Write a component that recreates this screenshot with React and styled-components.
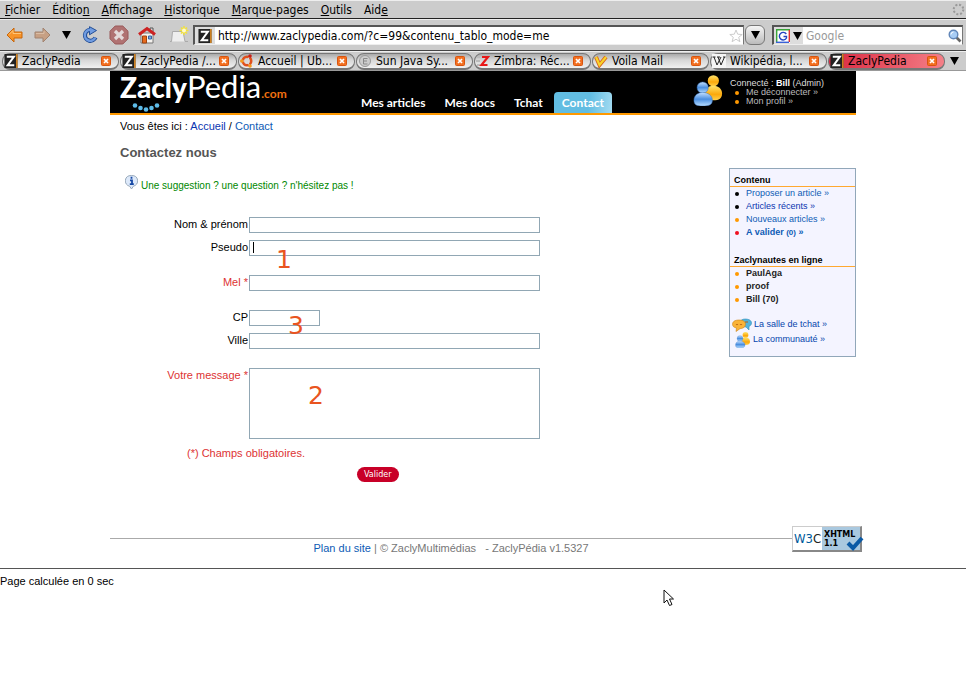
import React from "react";
import styled, { createGlobalStyle } from "styled-components";

const ui = '"DejaVu Sans Condensed", "DejaVu Sans", sans-serif';
const page = '"Liberation Sans", Arial, sans-serif';

const GlobalStyle = createGlobalStyle`
  * { box-sizing: border-box; }
  body { margin: 0; background: #fff; color: #000; font: 11px/14px ${page}; }
  a { color: #0645ad; text-decoration: none; }
  button, input, textarea { font: inherit; color: inherit; }
  svg { display: block; flex: none; }
`;

const Window = styled.div`
  position: relative;
  min-height: 100vh;
  overflow: hidden;
`;

/* ---------- browser chrome ---------- */
const Chrome = styled.div`
  background: #cccccc;
  font: 12px/16px ${ui};
`;
const MenuBar = styled.nav`
  display: flex;
  align-items: center;
  gap: 12px;
  height: 19px;
  padding: 0 1px 0 5px;
  border-top: 1px solid #eeeeee;
  border-bottom: 1px solid #222222;
`;
const MenuItem = styled.button`
  border: 0;
  padding: 0;
  background: none;
`;
const Push = styled.span`
  margin-left: auto;
`;
const ToolBar = styled.div`
  display: flex;
  align-items: center;
  height: 32px;
  padding: 0 3px 0 4px;
  border-top: 1px solid #eeeeee;
  border-bottom: 1px solid #444444;
`;
const IconButton = styled.button`
  display: flex;
  justify-content: center;
  width: ${(p) => p.$w}px;
  padding: 0;
  border: 0;
  background: none;
`;
const Field = styled.div`
  display: flex;
  align-items: center;
  flex: ${(p) => (p.$grow ? "1" : "0 0 191px")};
  height: 20px;
  border: 1px solid #777777;
  border-top: 2px solid #555555;
  border-left: 2px solid #555555;
  border-bottom-color: #eeeeee;
  background: #fff;
`;
const FieldIcon = styled.span`
  display: flex;
  align-items: center;
  justify-content: center;
  gap: 3px;
  width: ${(p) => p.$w}px;
  height: 100%;
  background: #dddddd;
`;
const FieldInput = styled.input`
  flex: 1;
  min-width: 0;
  padding: 0 3px;
  border: 0;
  outline: 0;
  background: none;
  &::placeholder { color: #999999; opacity: 1; }
`;
const DropButton = styled.button`
  display: flex;
  align-items: center;
  justify-content: center;
  width: 20px;
  height: 20px;
  margin: 0 7px 0 1px;
  padding: 0;
  border: 1px solid #777777;
  border-radius: 6px;
  background: linear-gradient(#f5f5f5, #bbbbbb);
`;
const TabBar = styled.div`
  display: flex;
  align-items: flex-end;
  gap: 1px;
  height: 20px;
  padding: 0 3px 0 2px;
  border-top: 1px solid #eeeeee;
  border-bottom: 1px solid #999999;
`;
const Tab = styled.div`
  display: flex;
  align-items: center;
  flex: 1;
  min-width: 0;
  height: 17px;
  padding: 0 7px 0 1px;
  border: 1px solid #777777;
  border-radius: 8px;
  border-bottom-width: 2px;
  background: ${(p) =>
    p.$active
      ? "linear-gradient(100deg, #d92740, #f58088)"
      : "linear-gradient(#aaaaaa, #d5d5d5 40%, #f0f0f0)"};
`;
const TabTitle = styled.button`
  flex: 1;
  min-width: 0;
  margin: 0;
  padding: 0 0 0 4px;
  border: 0;
  background: none;
  text-align: left;
  white-space: nowrap;
`;
const Close = styled.button`
  padding: 0;
  border: 0;
  background: none;
`;
const TabMenu = styled(IconButton)`
  align-self: center;
`;

/* ---------- site ---------- */
const Site = styled.div`
  max-width: 746px;
  margin: 0 auto;
`;
const Header = styled.header`
  display: flex;
  height: 44px;
  padding-left: 10px;
  border-bottom: 2px solid #ff9900;
  background: #000;
  color: #fff;
`;
const Logo = styled.a`
  position: relative;
  display: flex;
  align-items: baseline;
  width: 233px;
  color: #fff;
  font: 900 28px/31px Lato, sans-serif;
`;
const LogoThin = styled.span`
  font-size: 31px;
  font-weight: 400;
`;
const LogoCom = styled.span`
  color: #f07010;
  font-size: 12px;
  font-weight: 700;
`;
const Dots = styled.svg`
  position: absolute;
  left: 12px;
  top: 32px;
`;
const MainNav = styled.nav`
  display: flex;
  align-items: flex-end;
  gap: 3px;
`;
const NavLink = styled.a`
  padding: 0 8px;
  border-radius: 4px 4px 0 0;
  background: ${(p) => (p.$active ? "linear-gradient(100deg, #62bde2 60%, #a5dcf2)" : "none")};
  color: #fff;
  font: 700 12px/21px Lato, sans-serif;
  white-space: nowrap;
`;
const Account = styled.div`
  display: flex;
  gap: 6px;
  width: 163px;
  margin-left: auto;
  padding-top: 4px;
  font-size: 9px;
  line-height: 9px;
  color: #dddddd;
  a { color: #bbbbbb; }
  b { color: #fff; }
`;
const AccountText = styled.div`
  padding-top: 4px;
`;
const List = styled.ul`
  margin: 0;
  padding: 0;
  list-style: none;
`;
const Item = styled.li`
  display: flex;
  align-items: center;
  gap: 7px;
  padding-left: 5px;
  &::before {
    content: "";
    width: 4px;
    height: 4px;
    border-radius: 2px;
    background: ${(p) => p.$dot || "#ff9900"};
  }
`;
const Columns = styled.div`
  display: flex;
  align-items: flex-start;
`;
const Main = styled.main`
  flex: 1;
  padding: 4px 0 0 10px;
`;
const Crumbs = styled.nav`
  white-space: pre;
`;
const Title = styled.h1`
  margin: 12px 0 0;
  color: #555555;
  font-size: 13px;
  line-height: 16px;
`;
const Hint = styled.p`
  display: flex;
  gap: 3px;
  margin: 14px 0 0 5px;
  color: #008800;
  font-size: 10px;
  line-height: 21px;
`;
const Form = styled.form`
  margin-top: 21px;
`;
const Row = styled.div`
  display: flex;
  align-items: flex-start;
  gap: 1px;
  margin-top: ${(p) => p.$top || 0}px;
  position: relative;
`;
const Label = styled.label`
  width: 128px;
  line-height: 14px;
  text-align: right;
  white-space: nowrap;
  color: ${(p) => (p.$required ? "#dd3333" : "#000")};
`;
const TextBox = styled.input`
  width: ${(p) => (p.$short ? 71 : 291)}px;
  height: 16px;
  padding: 0 3px;
  border: 1px solid #91a7b4;
  border-radius: 0;
  outline: 0;
  background: #fff;
`;
const MessageBox = styled(TextBox)`
  height: 71px;
  resize: none;
`;
const Caret = styled.span`
  position: absolute;
  left: 133px;
  top: 2px;
  width: 1px;
  height: 11px;
  background: #000;
`;
const Mark = styled.span`
  position: absolute;
  left: ${(p) => p.$x}px;
  top: ${(p) => p.$y}px;
  z-index: 1;
  color: #e95420;
  font: 25px/28px "DejaVu Sans", sans-serif;
  pointer-events: none;
`;
const Note = styled.p`
  margin: 7px 0 0 67px;
  color: #dd3333;
`;
const Submit = styled.button`
  display: block;
  height: 15px;
  margin: 7px 0 0 237px;
  padding: 0 7px;
  border: 0;
  border-radius: 8px;
  background: #c80028;
  color: #fff;
  font: 8px/15px "DejaVu Sans", sans-serif;
`;
const Aside = styled.aside`
  width: 127px;
  margin-top: 53px;
  padding: 6px 0 9px;
  border: 1px solid #91a7b9;
  background: #f4f4ff;
  color: #222222;
  font-size: 9px;
  line-height: 13px;
  small { font-size: 8px; }
`;
const AsideTitle = styled.h2`
  margin: ${(p) => p.$top || 0}px 0 0;
  padding-left: 4px;
  border-bottom: 1px solid #ffa830;
  color: #000;
  font-size: 9px;
  line-height: 11px;
`;
const AsideLink = styled.a`
  display: flex;
  align-items: center;
  gap: 2px;
  height: 15px;
  padding-left: ${(p) => p.$indent}px;
`;
const Gap = styled.div`
  height: 11px;
`;
const Blue = styled.a`
  && { color: ${(p) => (p.$dark ? "#0a35b0" : "#0d5bb5")}; }
`;
const Footer = styled.footer`
  display: flex;
  align-items: flex-start;
  margin: 44px -9px 0 0;
`;
const Legal = styled.div`
  flex: 1;
  margin-top: 12px;
  padding-top: 2px;
  border-top: 1px solid #aaaaaa;
  color: #777777;
  text-align: center;
  white-space: pre;
`;
const Badge = styled.a`
  position: relative;
  display: flex;
  width: 70px;
  height: 26px;
  margin-right: 3px;
  border: 1px solid #cccccc;
  border-right: 2px solid #888888;
  border-bottom: 2px solid #888888;
`;
const W3 = styled.span`
  width: 29px;
  color: #005a9c;
  font: 13px/23px ${ui};
  text-align: center;
  i { color: #222222; font-style: normal; }
`;
const Xhtml = styled.span`
  flex: 1;
  padding: 3px 0 0 2px;
  background: #a9c8df;
  color: #000;
  font: 700 8px/9px "DejaVu Sans", sans-serif;
`;
const Check = styled.svg`
  position: absolute;
  left: 53px;
  top: 8px;
`;
const Timing = styled.p`
  margin: 13px 0 0;
  padding-top: 5px;
  border-top: 1px solid #555555;
`;
const Pointer = styled.svg`
  position: absolute;
  left: 663px;
  top: 589px;
`;

/* ---------- drawings ---------- */
const Arrow = ({ flip, faded }) => (
  <svg width="17" height="16" viewBox="0 0 17 16">
    <path
      d={flip ? "M16 8 9 1v4H1v6h8v4z" : "M1 8l7-7v4h8v6H8v4z"}
      fill={faded ? "#c7a084" : "#f79429"}
      stroke={faded ? "#a18370" : "#c8660a"}
    />
    <path d={flip ? "M2 6.5h8V4" : "M3 7.5 7 3.5v3h8"} fill="none" stroke={faded ? "#dabda5" : "#ffc578"} />
  </svg>
);
const Down = () => (
  <svg width="9" height="8" viewBox="0 0 9 8"><path d="M0 0h9L4.500 8z" fill="#000" /></svg>
);
const Reload = () => (
  <svg width="18" height="18" viewBox="0 0 18 18">
    <path d="M14.500 11.500A5.500 5.500 0 1 1 9 3.800" fill="none" stroke="#234e96" strokeWidth="4.200" />
    <path d="M8.500 .7 15.500 4.500 8.500 8.800z" fill="#6f9be0" stroke="#234e96" />
    <path d="M14.200 11.800A5.500 5.500 0 1 1 9.500 3.800" fill="none" stroke="#6f9be0" strokeWidth="2.400" />
  </svg>
);
const Stop = () => (
  <svg width="20" height="20" viewBox="0 0 20 20">
    <path d="M6.200 1h7.600L19 6.200v7.600L13.800 19H6.200L1 13.800V6.200z" fill="#b07272" stroke="#985858" />
    <path d="m6 6 8 8m0-8-8 8" stroke="#e4dada" strokeWidth="3.200" />
  </svg>
);
const Home = () => (
  <svg width="18" height="18" viewBox="0 0 18 18">
    <path d="M3 7h12v10H3z" fill="#f5f2ee" stroke="#777" />
    <path d="M12 2h3v4h-3z" fill="#ddd" stroke="#555" />
    <path d="M1 8.500 9 2.500l8 6" fill="none" stroke="#c22" strokeWidth="3" />
    <path d="M4.500 10h4v7h-4z" fill="#e86a1c" stroke="#9d4410" />
    <path d="M10.500 10h3v3h-3z" fill="#7ea8dd" stroke="#3465a4" />
  </svg>
);
const NewTab = () => (
  <svg width="20" height="18" viewBox="0 0 20 18">
    <path d="M1 15.500h1.500L3.500 5.500H14l2 10h3" fill="#eeeeee" stroke="#aaa" />
    <path d="M15 0v9M10.500 4.500h9M12 1.500l6 6M18 1.500l-6 6" stroke="#f2e13c" strokeWidth="1.600" />
    <circle cx="15" cy="4.500" r="2" fill="#fffbd0" />
  </svg>
);
const Zed = () => (
  <svg width="14" height="14" viewBox="0 0 14 15">
    <path d="M0 0h14v15H0z" fill="#222" /><path d="M12.500 0H14v15h-1.500z" fill="#e89020" />
    <path d="M2.500 3h7.500L3.500 12h7" fill="none" stroke="#fff" strokeWidth="2.200" />
  </svg>
);
const Ubuntu = () => (
  <svg width="14" height="14" viewBox="0 0 14 14">
    <circle cx="7" cy="7" r="4.200" fill="none" stroke="#e0501c" strokeWidth="2.600" />
    <path d="M7 7 1 7M7 7l3-5M7 7l3 5" stroke="#d8d8d8" strokeWidth="1" />
    <circle cx="1.800" cy="7" r="1.800" fill="#f39a1e" /><circle cx="10" cy="2" r="1.800" fill="#c5201c" /><circle cx="10" cy="12" r="1.800" fill="#f39a1e" />
  </svg>
);
const Euro = () => (
  <svg width="14" height="14" viewBox="0 0 14 14">
    <circle cx="7" cy="7" r="5.500" fill="#ccc" stroke="#999" /><path d="M9.500 4.500H5.500v5.500h4M5.500 7h3.500" fill="none" stroke="#888" />
  </svg>
);
const Zimbra = () => (
  <svg width="14" height="14" viewBox="0 0 14 14">
    <path d="M1 3h3M0 7h4M1 11h3" stroke="#bbb" strokeWidth="2" /><path d="M6 3h6L5.500 11h6" fill="none" stroke="#e81818" strokeWidth="2.200" />
  </svg>
);
const Voila = () => (
  <svg width="14" height="14" viewBox="0 0 14 14">
    <path d="m2 3 3.500 8L12 3" fill="none" stroke="#d8661c" strokeWidth="4" /><path d="m2 3 3.500 8L12 3" fill="none" stroke="#f8d42a" strokeWidth="2.200" />
  </svg>
);
const Wiki = () => (
  <svg width="14" height="14" viewBox="0 0 14 14">
    <path d="M0 0h14v14H0z" fill="#f5f5f5" /><path d="m2 3 3 8 4-8M6 3l3 8 3.500-8M.5 3h3M5 3h3M11 3h2.500" fill="none" stroke="#222" />
  </svg>
);
const CloseIcon = () => (
  <svg width="10" height="10" viewBox="0 0 10 10">
    <rect x=".5" y=".5" width="9" height="9" rx="1" fill="#f37021" stroke="#d8540f" /><path d="m3 3 4 4m0-4L3 7" stroke="#fff" strokeWidth="1.700" />
  </svg>
);
const Star = () => (
  <svg width="14" height="14" viewBox="0 0 14 14"><path d="m7 1 1.700 4.200 4.500.3-3.500 2.800 1.200 4.400L7 10.200l-3.900 2.500 1.200-4.400L.8 5.500l4.500-.3z" fill="#fff" stroke="#ccc" /></svg>
);
const Google = () => (
  <svg width="14" height="14" viewBox="0 0 14 14">
    <path d="M0 0h14v14H0z" fill="#fff" /><path d="M.7 14V.7H14" fill="none" stroke="#3aa53a" strokeWidth="1.400" /><path d="M13.300 1v12" stroke="#e03030" strokeWidth="1.400" /><path d="M0 13.300h13" stroke="#3a62d8" strokeWidth="1.400" />
    <path d="M10.300 5A3.800 3.800 0 1 0 10.500 9V7.500H7.500" fill="none" stroke="#2545c0" strokeWidth="1.400" />
  </svg>
);
const Lens = () => (
  <svg width="14" height="14" viewBox="0 0 14 14">
    <path d="m8.500 8.500 4 4" stroke="#666" strokeWidth="2.600" /><circle cx="5.500" cy="5.500" r="4.300" fill="#a8cdf5" stroke="#6186b8" strokeWidth="1.400" /><path d="M3 5.500A2.500 2.500 0 0 1 5.500 3" fill="none" stroke="#fff" />
  </svg>
);
const Spinner = () => (
  <svg width="13" height="13" viewBox="0 0 13 13"><circle cx="6.500" cy="6.500" r="4.800" fill="none" stroke="#999" strokeWidth="2" strokeDasharray="2 1.770" /></svg>
);
const People = ({ size = 32 }) => (
  <svg width={size} height={size} viewBox="0 0 32 32">
    <defs>
      <linearGradient id="gold" x2="0" y2="1"><stop stopColor="#ffe36a" /><stop offset=".6" stopColor="#fba80c" /><stop offset="1" stopColor="#ffd04a" /></linearGradient>
      <linearGradient id="sky" x2="0" y2="1"><stop stopColor="#c4e0ff" /><stop offset=".5" stopColor="#4b8fe0" /><stop offset="1" stopColor="#b9deff" /></linearGradient>
    </defs>
    <circle cx="21" cy="6" r="5.800" fill="url(#gold)" /><path d="M12 19c0-5 4-8 9-8s9 3 9 8-3 7-9 7-9-2-9-7z" fill="url(#gold)" />
    <circle cx="10" cy="13" r="5.800" fill="url(#sky)" stroke="#3973bd" strokeWidth=".5" /><path d="M1 26c0-5 4-8 9-8s10 3 10 8-4 6-10 6-9-1-9-6z" fill="url(#sky)" stroke="#3973bd" strokeWidth=".5" />
  </svg>
);
const Chat = () => (
  <svg width="20" height="14" viewBox="0 0 20 14">
    <path d="M13 1c4 0 6.500 1.500 6.500 4 0 1.700-1 2.800-2.500 3.400V12l-3-3c-4 0-6-1.500-6-4s2-4 5-4z" fill="#52b3dd" stroke="#348fbb" strokeWidth=".6" />
    <path d="M7 2c4 0 6.500 1.500 6.500 4.300S11 10.500 8 10.700L4 13.500 4.500 10C2 9.500.5 8.300.5 6.300.5 3.500 3 2 7 2z" fill="#f9b338" stroke="#c9851c" strokeWidth=".6" />
    <path d="M4 6c.5 1 1.500 1 2 0m2 0c.5 1 1.500 1 2 0m3-2h3" fill="none" stroke="#b45d10" />
  </svg>
);
const Info = () => (
  <svg width="13" height="15" viewBox="0 0 13 15">
    <path d="M6.500.5a6 5.500 0 0 1 1.800 10.800L6.500 14l-1.800-2.700A6 5.500 0 0 1 6.500.5z" fill="#dde9fa" stroke="#9ab" />
    <path d="M6.500 1.800v2M5 5.300h2v3.500M4.800 9.200h4" fill="none" stroke="#1749a5" strokeWidth="1.800" />
  </svg>
);

const MENUS = [["", "F", "ichier"], ["Éditio", "n", ""], ["", "A", "ffichage"], ["", "H", "istorique"], ["", "M", "arque-pages"], ["", "O", "utils"], ["Aid", "e", ""]];
const TABS = [
  [Zed, "ZaclyPedia"], [Zed, "ZaclyPedia /..."], [Ubuntu, "Accueil | Ub..."], [Euro, "Sun Java Sy..."],
  [Zimbra, "Zimbra: Réc..."], [Voila, "Voila Mail"], [Wiki, "Wikipédia, l..."], [Zed, "ZaclyPedia"],
];
const NAV = ["Mes articles", "Mes docs", "Tchat", "Contact"];

export default function App() {
  return (
    <Window>
      <GlobalStyle />
      <Chrome>
        <MenuBar>
          {MENUS.map(([a, u, b]) => <MenuItem key={a + u + b}>{a}<u>{u}</u>{b}</MenuItem>)}
          <Push><Spinner /></Push>
        </MenuBar>
        <ToolBar>
          <IconButton $w={20} aria-label="Précédent"><Arrow /></IconButton>
          <IconButton $w={36} aria-label="Suivant"><Arrow flip faded /></IconButton>
          <IconButton $w={12} aria-label="Pages récentes"><Down /></IconButton>
          <IconButton $w={36} aria-label="Actualiser"><Reload /></IconButton>
          <IconButton $w={22} aria-label="Arrêter"><Stop /></IconButton>
          <IconButton $w={34} aria-label="Accueil"><Home /></IconButton>
          <IconButton $w={29} aria-label="Nouvel onglet"><NewTab /></IconButton>
          <Field $grow>
            <FieldIcon $w={20}><Zed /></FieldIcon>
            <FieldInput aria-label="Adresse" defaultValue="http://www.zaclypedia.com/?c=99&contenu_tablo_mode=me" />
            <Star />
          </Field>
          <DropButton aria-label="Historique des adresses"><Down /></DropButton>
          <Field>
            <FieldIcon $w={29}><Google /><Down /></FieldIcon>
            <FieldInput aria-label="Recherche" placeholder="Google" />
            <Lens />
          </Field>
        </ToolBar>
        <TabBar>
          {TABS.map(([Icon, name], i) => (
            <Tab key={i} $active={i === 7}>
              <Icon />
              <TabTitle>{name}</TabTitle>
              <Close aria-label={`Fermer ${name}`}><CloseIcon /></Close>
            </Tab>
          ))}
          <TabMenu $w={17} aria-label="Liste des onglets"><Down /></TabMenu>
        </TabBar>
      </Chrome>

      <Site>
        <Header>
          <Logo href="#">
            Zacly<LogoThin>Pedia</LogoThin><LogoCom>.com</LogoCom>
            <Dots width="28" height="9" viewBox="0 0 28 9" fill="#5dbbe8">
              <circle cx="3" cy="2.500" r="2.300" /><circle cx="8.500" cy="5" r="2.300" /><circle cx="14" cy="6.500" r="2.300" /><circle cx="19.500" cy="5" r="2.300" /><circle cx="25" cy="2.500" r="2.300" />
            </Dots>
          </Logo>
          <MainNav>
            {NAV.map((n) => <NavLink key={n} href="#" $active={n === "Contact"}>{n}</NavLink>)}
          </MainNav>
          <Account>
            <People size={31} />
            <AccountText>
              Connecté : <b>Bill</b> (Admin)
              <List>
                <Item><a href="#">Me déconnecter »</a></Item>
                <Item><a href="#">Mon profil »</a></Item>
              </List>
            </AccountText>
          </Account>
        </Header>

        <Columns>
          <Main>
            <Crumbs>Vous êtes ici : <Blue $dark href="#">Accueil</Blue> / <Blue href="#">Contact</Blue></Crumbs>
            <Title>Contactez nous</Title>
            <Hint><Info />Une suggestion ? une question ? n'hésitez pas !</Hint>
            <Form onSubmit={(e) => e.preventDefault()}>
              <Row><Label htmlFor="nom">Nom &amp; prénom</Label><TextBox id="nom" /></Row>
              <Row $top={7}><Label htmlFor="pseudo">Pseudo</Label><TextBox id="pseudo" /><Caret /><Mark $x={156} $y={6}>1</Mark></Row>
              <Row $top={19}><Label htmlFor="mel" $required>Mel *</Label><TextBox id="mel" /></Row>
              <Row $top={19}><Label htmlFor="cp">CP</Label><TextBox id="cp" $short /><Mark $x={168} $y={2}>3</Mark></Row>
              <Row $top={7}><Label htmlFor="ville">Ville</Label><TextBox id="ville" /></Row>
              <Row $top={19}><Label htmlFor="message" $required>Votre message *</Label><MessageBox as="textarea" id="message" /><Mark $x={188} $y={14}>2</Mark></Row>
              <Note>(*) Champs obligatoires.</Note>
              <Submit>Valider</Submit>
            </Form>
          </Main>
          <Aside>
            <AsideTitle>Contenu</AsideTitle>
            <List>
              <Item $dot="#000"><Blue href="#">Proposer un article »</Blue></Item>
              <Item $dot="#000"><Blue $dark href="#">Articles récents »</Blue></Item>
              <Item><Blue href="#">Nouveaux articles »</Blue></Item>
              <Item $dot="#f01020"><Blue href="#"><b>A valider <small>(0)</small> »</b></Blue></Item>
            </List>
            <AsideTitle $top={16}>Zaclynautes en ligne</AsideTitle>
            <List>
              <Item><b>PaulAga</b></Item>
              <Item><b>proof</b></Item>
              <Item><b>Bill (70)</b></Item>
            </List>
            <Gap />
            <AsideLink href="#" $indent={2}><Chat />La salle de tchat »</AsideLink>
            <AsideLink href="#" $indent={5}><People size={16} />La communauté »</AsideLink>
          </Aside>
        </Columns>

        <Footer>
          <Legal><Blue href="#">Plan du site</Blue> | © ZaclyMultimédias   - ZaclyPédia v1.5327</Legal>
          <Badge href="#">
            <W3>W3<i>C</i></W3>
            <Xhtml>XHTML<br />1.1</Xhtml>
            <Check width="18" height="16" viewBox="0 0 18 16"><path d="m2 8 5 5 9-10" fill="none" stroke="#0b5aa5" strokeWidth="4" /></Check>
          </Badge>
        </Footer>
      </Site>
      <Timing>Page calculée en 0 sec</Timing>
      <Pointer width="12" height="18" viewBox="0 0 12 18"><path d="M1 1v13l3-3 2.500 5.500 2.500-1L6.500 10H10.500z" fill="#fff" stroke="#111" /></Pointer>
    </Window>
  );
}
